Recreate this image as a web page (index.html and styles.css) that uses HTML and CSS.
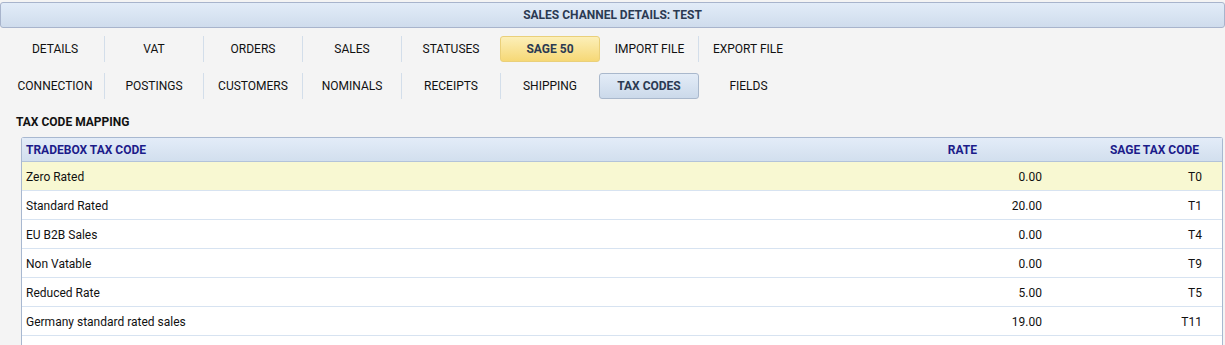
FILE: index.html
```html
<!DOCTYPE html>
<html>
<head>
<meta charset="utf-8">
<link rel="stylesheet" href="styles.css">
</head>
<body>
<div class="page">
  <div class="titlebar">SALES CHANNEL DETAILS: TEST</div>
  <nav class="tabs row1">
    <span class="tab">DETAILS</span>
    <span class="tab">VAT</span>
    <span class="tab">ORDERS</span>
    <span class="tab">SALES</span>
    <span class="tab">STATUSES</span>
    <span class="tab active gold">SAGE 50</span>
    <span class="tab">IMPORT FILE</span>
    <span class="tab">EXPORT FILE</span>
  </nav>
  <nav class="tabs row2">
    <span class="tab">CONNECTION</span>
    <span class="tab">POSTINGS</span>
    <span class="tab">CUSTOMERS</span>
    <span class="tab">NOMINALS</span>
    <span class="tab">RECEIPTS</span>
    <span class="tab">SHIPPING</span>
    <span class="tab active blue">TAX CODES</span>
    <span class="tab">FIELDS</span>
  </nav>
  <h2 class="section">TAX CODE MAPPING</h2>
  <div class="grid">
    <div class="ghead">
      <div class="c1">TRADEBOX TAX CODE</div>
      <div class="c2">RATE</div>
      <div class="c3">SAGE TAX CODE</div>
    </div>
    <div class="grow selected"><div class="c1">Zero Rated</div><div class="c2">0.00</div><div class="c3">T0</div></div>
    <div class="grow"><div class="c1">Standard Rated</div><div class="c2">20.00</div><div class="c3">T1</div></div>
    <div class="grow"><div class="c1">EU B2B Sales</div><div class="c2">0.00</div><div class="c3">T4</div></div>
    <div class="grow"><div class="c1">Non Vatable</div><div class="c2">0.00</div><div class="c3">T9</div></div>
    <div class="grow"><div class="c1">Reduced Rate</div><div class="c2">5.00</div><div class="c3">T5</div></div>
    <div class="grow"><div class="c1">Germany standard rated sales</div><div class="c2">19.00</div><div class="c3">T11</div></div>
    <div class="gfill"></div>
  </div>
</div>
</body>
</html>
```
FILE: styles.css
```css
* { box-sizing: border-box; }
html, body { margin: 0; padding: 0; }
body {
  background: #f4f4f4;
  font-family: Roboto, "Liberation Sans", sans-serif;
  font-size: 12px;
  color: #111;
  width: 1225px;
  height: 345px;
  overflow: hidden;
}
.page { padding-top: 2px; }
.titlebar {
  height: 26px;
  border: 1px solid #a8b4cc;
  border-radius: 3px;
  background: linear-gradient(#e2ecf8, #cfdcec);
  font-weight: bold;
  color: #2b3a52;
  text-align: center;
  line-height: 25px;
  font-size: 12px;
}
.tabs {
  display: flex;
  padding-left: 5px;
}
.row1 { margin-top: 8px; }
.row2 { margin-top: 11px; }
.tab {
  width: 99px;
  height: 26px;
  line-height: 27px;
  text-align: center;
  border-left: 1px solid #d3deea;
  background-clip: padding-box;
}
.tab:first-child { border-left-color: transparent; }
.tab.active, .tab.active + .tab { border-left-color: transparent; }
.tab.active + .tab { width: 98px; }
.tab.active {
  width: 100px;
  border: 1px solid;
  border-radius: 3px;
  font-weight: bold;
  color: #2b3a52;
  line-height: 25px;
}
.tab.gold {
  background: linear-gradient(#fcefb8, #f6d876);
  border-color: #ead07a;
}
.tab.blue {
  background: linear-gradient(#e3ecf7, #cbd9ea);
  border-color: #a9b8cc;
}
.section {
  margin: 15px 0 0 16px;
  font-size: 12px;
  font-weight: bold;
  color: #111;
  height: 16px;
  line-height: 16px;
}
.grid {
  margin: 7px 2px 0 21px;
  border: 1px solid #a8b8d0;
  border-bottom: none;
  border-radius: 3px 3px 0 0;
  background: #fff;
}
.ghead, .grow {
  display: grid;
  grid-template-columns: 1fr 170px 170px;
  align-items: center;
}
.ghead {
  height: 24px;
  background: linear-gradient(#e3ecf8, #d2dfee);
  border-bottom: 1px solid #b3c3d9;
  color: #1c1c8a;
  font-weight: bold;
}
.grow {
  height: 29px;
  padding-top: 1px;
  border-bottom: 1px solid #d7e3f1;
  color: #111;
}
.grow.selected { background: #f8f8d2; }
.c1 { padding-left: 4px; }
.c2, .c3 { text-align: right; }
.ghead .c2 { padding-right: 75px; }
.grow .c2 { padding-right: 10px; }
.ghead .c3 { padding-right: 23px; }
.grow .c3 { padding-right: 20px; }
.gfill { height: 20px; }
```
